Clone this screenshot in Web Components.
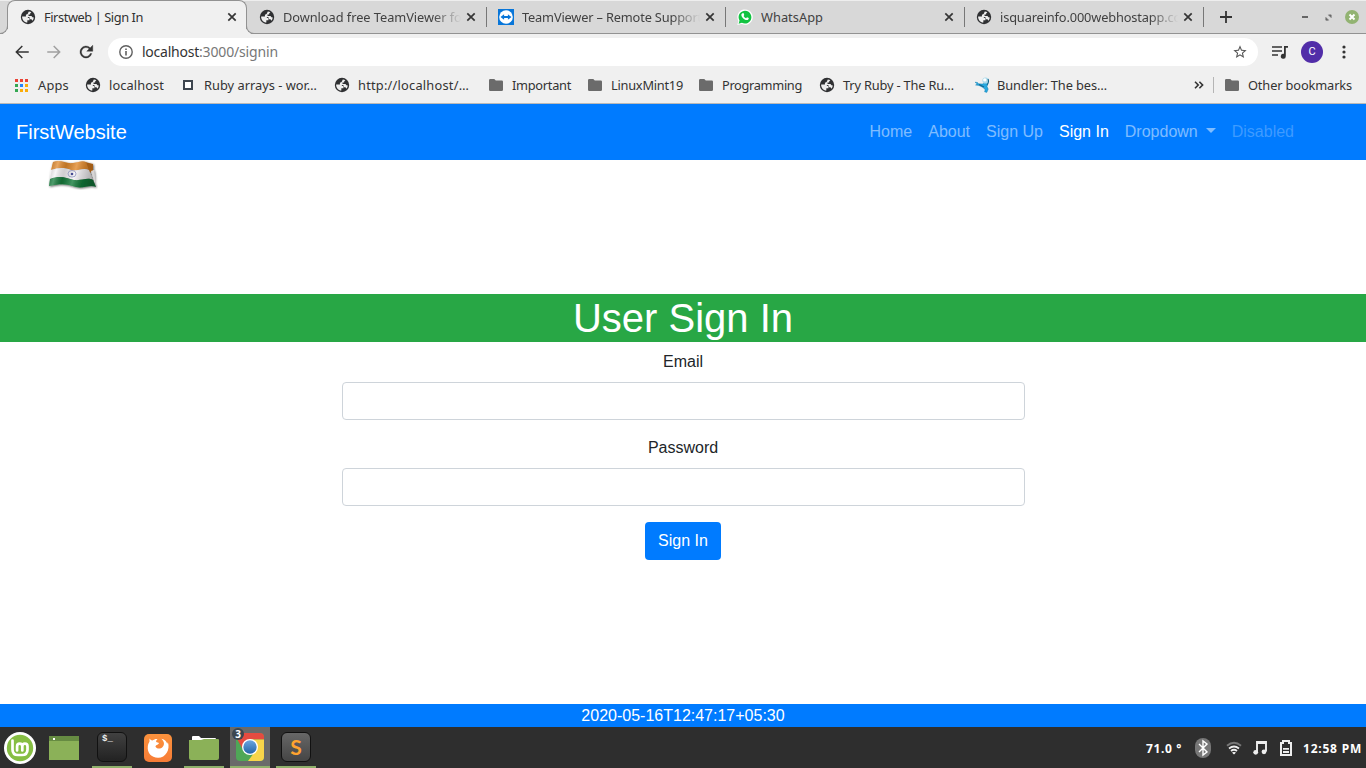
<!DOCTYPE html>
<html lang="en"><head><meta charset="utf-8"><title>Firstweb | Sign In</title>
<style>html,body{margin:0;width:1366px;height:768px;overflow:hidden;background:#fff}</style></head>
<body><desktop-screen></desktop-screen>
<script>
const define=(name,html,setup)=>customElements.define(name,class extends HTMLElement{
  connectedCallback(){
    if(this.shadowRoot)return;
    const root=this.attachShadow({mode:'open'});
    root.innerHTML=typeof html==='function'?html(this):html;
    if(setup)setup(this,root);
  }
});
const ICONS={
globe:['0 0 24 24','<circle cx="12" cy="12" r="10.8" fill="#2f3032"/><path d="M3.2 11.2h6.2c2 0 2.6 1 2.6 2.4h2.2v3.2h-3.2v3.6c-4.6-.3-8-4.3-7.8-9.2zM13.2 3.6c1.2.1 2.8.6 3.8 1.3l-1.8 1.8v1.7h-2.4v2.2h4.4l1.5 1.9 2 .3c-.2 2-.9 3.7-2 5l-1.5-2.3h-2.3v-2.3l-2.2-1.2-3.8-.8V8.8l2.5-1.3z" fill="#eee"/>'],
close:['0 0 10 10','<path d="M1.3 1.3l7.4 7.4m0-7.4L1.3 8.7" stroke="#353535" stroke-width="1.7" fill="none"/>'],
team:['0 0 16 16','<path fill="#0876d9" d="M0 0h16v16H0z"/><circle cx="8" cy="8" r="6.8" fill="#fff"/><path d="M2.5 8l3.6-2.7v1.8h3.8V5.3L13.5 8l-3.6 2.7V8.9H6.1v1.8z" fill="#0876d9"/>'],
whats:['0 0 16 16','<path d="M.3 16l1.1-4A7.7 7.7 0 1 1 4.6 15z" fill="#fff"/><path d="M1.6 14.7l.9-3.2a6.4 6.4 0 1 1 2.4 2.3z" fill="#12c341"/><path d="M5.4 4.2l1.1-.1.8 1.9-.7.9c.6 1.1 1.4 1.8 2.5 2.3l.9-1 1.8.9c0 1.4-.9 2.1-2.1 2-2.7-.3-5.1-2.8-5.4-5.1 0-.7.4-1.4 1.1-1.8z" fill="#fff"/>'],
plus:['0 0 12 12','<path d="M6 0v12M0 6h12" stroke="#333" stroke-width="1.8"/>'],
back:['0 0 24 24','<path d="M21 11H6.8l6.3-6.3L11.7 3.3 3 12l8.7 8.7 1.4-1.4L6.8 13H21z" fill="#333"/>'],
forward:['0 0 24 24','<path d="M3 11h14.2l-6.3-6.3 1.4-1.4L21 12l-8.7 8.7-1.4-1.4 6.3-6.3H3z" fill="#a0a0a0"/>'],
reload:['0 0 24 24','<path d="M17.65 6.35A8 8 0 1 0 19.73 14h-2.08A6 6 0 1 1 16.2 7.8L13 11h8V3z" fill="#333" stroke="#333" stroke-width=".5"/>'],
info:['0 0 14 14','<circle cx="7" cy="7" r="6.2" fill="none" stroke="#606060" stroke-width="1.4"/><path d="M6.2 6h1.6v4.4H6.2zM6.2 3.4h1.6V5H6.2z" fill="#606060"/>'],
star:['0 0 24 24','<path d="M22 9.24l-7.19-.62L12 2 9.19 8.63 2 9.24l5.46 4.73L5.82 21 12 17.27 18.18 21l-1.63-7.03zM12 15.4l-3.76 2.27 1-4.28-3.32-2.88 4.38-.38L12 6.1l1.71 4.04 4.38.38-3.32 2.88 1 4.28z" fill="#555"/>'],
queue:['0 0 16 13','<path d="M0 1h10M0 5h10M0 9h6" stroke="#333" stroke-width="1.7"/><path d="M12 9.3V0h4v1.8h-2.2v8.4a2.5 2.5 0 1 1-1.8-2.4" fill="#333"/>'],
dots:['0 0 4 14','<g fill="#333"><circle cx="2" cy="2" r="1.6"/><circle cx="2" cy="7" r="1.6"/><circle cx="2" cy="12" r="1.6"/></g>'],
apps:['0 0 13 13','<path fill="#ea4335" d="M0 0h3v3H0zM5 0h3v3H5zM10 0h3v3h-3z"/><path fill="#34a853" d="M0 5h3v3H0zM0 10h3v3H0z"/><path fill="#2684fc" d="M5 5h3v3H5z"/><path fill="#fbac09" d="M10 5h3v3h-3zM5 10h3v3H5zM10 10h3v3h-3z"/>'],
square:['0 0 10 10','<path d="M1 1h8v8H1z" fill="#fff" stroke="#3e464f" stroke-width="2"/>'],
folder:['0 0 14 12','<path d="M1.3 0h4L6.8 1.5h6q1.2 0 1.2 1.2v8q0 1.3-1.3 1.3H1.3Q0 12 0 10.7V1.3Q0 0 1.3 0z" fill="#6b6b6b"/>'],
bundler:['0 0 16 16','<path d="M1 5.2l2.5.3 1 1.3 3.8.3L12 5.5l2 1-1 3 1.2 2.6-1.4 3.3-2.2-.6.6-2-2.2-2.4-4-2L1.6 8l1.8-.9z" fill="#27a8df" stroke="#1783b4" stroke-width=".5"/><circle cx="11.5" cy="3.5" r="3.1" fill="#a9d9ea"/><circle cx="10.8" cy="2.9" r="1.7" fill="#fff"/><path d="M14 2q1.4 3-1 6M5 7.6l5 2.5" stroke="#14678f" stroke-width="1.1" fill="none"/>'],
restore:['0 0 8 8','<path d="M4 1h3v3zM1 4v3h3z" fill="#555" stroke="#777"/>'],
winclose:['0 0 14 14','<circle cx="7" cy="7" r="7" fill="#92b372"/><path d="M4.5 4.5l5 5m0-5l-5 5" stroke="#fff" stroke-width="2"/>'],
more:['0 0 10 8','<path d="M1 .8L4.2 4 1 7.2M5.4.8L8.6 4 5.4 7.2" fill="none" stroke="#333" stroke-width="1.6"/>'],
flag:['0 0 50 30','<defs><linearGradient id="a" x2="1" y2=".15"><stop stop-color="#000" stop-opacity=".2"/><stop offset=".2" stop-color="#fff" stop-opacity=".25"/><stop offset=".38" stop-color="#000" stop-opacity=".15"/><stop offset=".6" stop-color="#fff" stop-opacity=".2"/><stop offset=".8" stop-color="#000" stop-opacity=".16"/><stop offset="1" stop-color="#000" stop-opacity=".3"/></linearGradient><filter id="b"><feDropShadow dx=".8" dy=".8" stdDeviation=".8" flood-opacity=".65"/></filter></defs><g filter="url(#b)"><path d="M37 2l8 2v7l-4 2z" fill="#a35d18"/><path d="M43 11l3-1 1 13z" fill="#d8d5d5"/><path d="M5 2C13-1 17 4 25 3c6-1 9-3 13-1l3 8c-6-3-12 2-18 0C15 7 10 8 3 10z" fill="#e28a2d"/><path d="M3 10c7-2 12-3 20 0 6 2 12-3 18 0l4 10c-6-3-11 1-19 0-8-2-13-5-24-1z" fill="#f5f3f6"/><path d="M2 19c10-4 16-1 24 1 8 1 13-3 19 0l3 7c-6-3-13 2-20 0-9-3-14-4-27-1z" fill="#147b3b"/><path d="M5 2C13-1 17 4 25 3c6-1 9-3 13-1l10 25c-6-3-13 2-20 0-9-3-14-4-27-1z" fill="url(#a)"/></g><ellipse cx="24" cy="13.8" rx="4" ry="3.3" fill="none" stroke="#8c91bd" stroke-width=".8"/><circle cx="24" cy="14" r="1.3" fill="#454a91"/>'],
mint:['0 0 32 32','<circle cx="16" cy="16" r="16" fill="#fff"/><circle cx="16" cy="16" r="13.2" fill="#86be43"/><path d="M8.5 8.5v9q0 5.5 5.5 5.5h4q5.5 0 5.5-5.5v-3q0-2.8-2.6-2.8t-2.6 2.8v4m0-4q0-2.8-2.6-2.8t-2.6 2.8v4" fill="none" stroke="#fff" stroke-width="2.7" stroke-linecap="round"/>'],
desktop:['0 0 30 24','<path fill="#8bb158" d="M0 0h30v24H0z"/><path fill="#668b42" d="M0 0h30v5H0z"/><path fill="#fff" d="M4 2h2v2H4z"/>'],
firefox:['0 0 28 28','<defs><linearGradient id="f" y2="1" x2="0"><stop stop-color="#fb923d"/><stop offset="1" stop-color="#f77c36"/></linearGradient></defs><rect width="28" height="28" rx="5" fill="url(#f)"/><path d="M5.5 4.5q1.4 2.1 2.8 2.1c1.8-1.5 3.8-1.9 5.3-1.6-1.2.8-1.6 2-1.4 3l2.9 1.1c-.5 1.8-2.9 1.6-3.7 3.1.8 2.7 4.9 3.3 7.2.8 2.4-2.5 1.4-5.9-1.2-8.2 3.6.7 5.3 2.8 5.8 5l.7-1.6c2.5 7.6-2.3 15.4-9.6 15.6-6.8.2-11.3-5-10.5-11.2.1-2.3 1.2-4.1 1.7-5.1z" fill="#fff"/>'],
files:['0 0 30 25','<path d="M3 8V2q0-1 1-1h6l2 2h14q1 0 1 1v4z" fill="#fff"/><path d="M0 5h12l3-1h14q1 0 1 1v18q0 2-2 2H2q-2 0-2-2z" fill="#8bb158"/>'],
chrome:['0 0 28 28','<defs><clipPath id="c"><rect width="28" height="28" rx="4"/></clipPath><linearGradient id="d" x2="0" y2="1"><stop stop-color="#6ba6df"/><stop offset="1" stop-color="#2465a9"/></linearGradient></defs><g clip-path="url(#c)"><path fill="#4fa757" d="M0 0h28v28H0z"/><path fill="#e54b40" d="M0 0h28v6.5H14L6 15 0 4z"/><path fill="#f8d54a" d="M14 6.5h14V28H12l9-12z"/></g><circle cx="14" cy="14" r="8" fill="#fff"/><circle cx="14" cy="14" r="6.7" fill="url(#d)"/>'],
bluetooth:['0 0 16 20','<rect width="16" height="20" rx="8" fill="#777"/><path d="M4 6l8 8-4 3V3l4 3-8 8" fill="none" stroke="#fff" stroke-width="1.4"/>'],
wifi:['0 0 16 14','<path d="M1 4.8q7-6 14 0" fill="none" stroke="#777" stroke-width="2"/><path d="M3 7.5q5-4 10 0M5 10q3-2.4 6 0" fill="none" stroke="#eee" stroke-width="1.8"/><path d="M6 11.5q2-1 4 0l-2 2z" fill="#fff"/>'],
music:['0 0 14 14','<path d="M4 11V1h9v9.5M4 2h9" fill="none" stroke="#eee" stroke-width="1.9"/><circle cx="2.7" cy="11.3" r="2.4" fill="#eee"/><circle cx="11" cy="10.8" r="2.4" fill="#eee"/>'],
battery:['0 0 12 16','<path d="M1 3h2V1h6v2h2v12H1z" fill="none" stroke="#eee" stroke-width="2"/><path fill="#eee" d="M3 8h6v1.7H3zM3 11h6v2H3z"/>']
};
define('ui-icon',e=>{const i=ICONS[e.getAttribute('name')];return `<style>:host{display:block;flex:none;width:${e.getAttribute('w')}px;height:${e.getAttribute('h')||e.getAttribute('w')}px}svg{display:block;width:100%;height:100%}</style><svg viewBox="${i[0]}">${i[1]}</svg>`});
// Adjusts tracking so a label occupies its assigned width.
define('fit-text','<style>:host{display:inline-block;white-space:nowrap;flex:none}span{display:inline-block}</style><span><slot></slot></span>',(e,r)=>{
 const s=r.querySelector('span'),w=+e.getAttribute('w');s.style.letterSpacing=((w-s.getBoundingClientRect().width)/e.textContent.length)+'px';
});
define('browser-tab',e=>`<style>
:host{display:flex;box-sizing:border-box;width:239px;height:33px;align-items:center;padding:1px 10px 0 12px;color:#414141;font:12.8px "Noto Sans",sans-serif;position:relative;flex:none}
:host([active]){width:240px;height:34px;background:#f0f0f0;border:1px solid #929292;border-bottom:0;border-radius:8px 8px 0 0;padding:0 10px 1px 12px;color:#303030;z-index:1}
:host([active])::before,:host([active])::after{content:"";position:absolute;bottom:0;width:8px;height:8px;border-bottom:1px solid #929292;box-sizing:border-box}
:host([active])::before{left:-8px;border-right:1px solid #929292;border-radius:0 0 8px 0;box-shadow:3px 3px 0 #f0f0f0;clip-path:inset(0)}
:host([active])::after{right:-8px;border-left:1px solid #929292;border-radius:0 0 0 8px;box-shadow:-3px 3px 0 #f0f0f0;clip-path:inset(0)}
.icon{width:24px;display:flex;flex:none}.label{width:178px;flex:none;overflow:hidden;white-space:nowrap;line-height:20px;margin-top:-1px}
:host([fade]) .label{-webkit-mask-image:linear-gradient(90deg,#000 150px,transparent 178px)}
.x{margin-left:5px}:host([sep])::after{content:"";position:absolute;right:-1px;top:7px;height:20px;border-right:1px solid #777}
</style><div class="icon"><ui-icon name="${e.getAttribute('icon')}" w="16"></ui-icon></div><div class="label"><fit-text w="${e.getAttribute('tw')}">${e.getAttribute('label')}</fit-text></div><ui-icon class="x" name="close" w="10"></ui-icon>`);
define('tab-strip',`<style>:host{display:flex;box-sizing:border-box;height:34px;background:#d8d8d8;border-bottom:1px solid #929292;box-shadow:inset 0 1px #eee;padding-left:7px}
.plus{margin:11px 0 0 17px}.win{margin:9px 7px 0 auto;display:flex;align-items:center;height:16px}.min{width:6px;height:2px;background:#666;margin-right:17px}.res{margin-right:13px}</style>
<browser-tab active icon="globe" label="Firstweb | Sign In" tw="99"></browser-tab>
<browser-tab fade sep icon="globe" label="Download free TeamViewer for" tw="184"></browser-tab>
<browser-tab fade sep icon="team" label="TeamViewer – Remote Support" tw="180"></browser-tab>
<browser-tab sep icon="whats" label="WhatsApp" tw="62"></browser-tab>
<browser-tab fade sep icon="globe" label="isquareinfo.000webhostapp.com" tw="193"></browser-tab>
<ui-icon class="plus" name="plus" w="12"></ui-icon><div class="win"><div class="min"></div><ui-icon class="res" name="restore" w="7"></ui-icon><ui-icon name="winclose" w="14"></ui-icon></div>`);
define('address-bar',`<style>:host{display:flex;align-items:center;height:36px;background:#f0f0f0;padding-left:13px;box-sizing:border-box}
.nav{margin-right:14px}.box{display:flex;align-items:center;box-sizing:border-box;width:1150px;height:28px;border-radius:14px;background:#fff;padding:0 10px 0 11px;margin-left:-1px;color:#777;font:14px "Noto Sans",sans-serif}
fit-text{margin-top:-2px}.info{margin-right:9px}.host{color:#333}.star{margin-left:auto}.queue{margin-left:14px}.avatar{width:22px;height:22px;border-radius:50%;background:#512da8;color:#fff;font:11px/22px Roboto,sans-serif;text-align:center;margin:0 19px 0 13px}</style>
<ui-icon class="nav" name="back" w="18"></ui-icon><ui-icon class="nav" name="forward" w="18"></ui-icon><ui-icon class="nav" name="reload" w="18"></ui-icon>
<div class="box"><ui-icon class="info" name="info" w="14"></ui-icon><fit-text class="host" w="57">localhost</fit-text><fit-text w="79">:3000/signin</fit-text><ui-icon class="star" name="star" w="16"></ui-icon></div>
<ui-icon class="queue" name="queue" w="16" h="13"></ui-icon><div class="avatar">C</div><ui-icon name="dots" w="4" h="14"></ui-icon>`);
define('bookmark-item',e=>`<style>:host{display:flex;align-items:center;flex:none;width:${e.getAttribute('width')}px;height:30px}.i{width:${e.getAttribute('gap')}px}</style><div class="i"><ui-icon name="${e.getAttribute('icon')}" w="${e.getAttribute('iw')}" h="${e.getAttribute('ih')||e.getAttribute('iw')}"></ui-icon></div><fit-text w="${e.getAttribute('tw')}">${e.getAttribute('label')}</fit-text>`);
define('bookmark-bar',()=>{const a=[
['apps',13,13,'Apps',70,23,31],['globe',16,16,'localhost',98,24,55],['square',10,10,'Ruby arrays - wor…',151,21,113],['globe',16,16,'http://localhost/…',155,24,111],['folder',14,12,'Important',99,23,59],['folder',14,12,'LinuxMint19',111,23,72],['folder',14,12,'Programming',120,23,80],['globe',16,16,'Try Ruby - The Ru…',155,24,111],['bundler',16,16,'Bundler: The bes…',220,23,110]];
return `<style>:host{display:flex;align-items:center;box-sizing:border-box;height:34px;background:#f0f0f0;border-bottom:1px solid #b9b9b9;padding:0 0 3px 15px;color:#333;font:12.8px "Noto Sans",sans-serif}.more{margin-right:9px}.sep{width:1px;height:16px;background:#b5b5b5;margin-right:11px}</style>`+a.map(x=>`<bookmark-item icon="${x[0]}" iw="${x[1]}" ih="${x[2]}" label="${x[3]}" width="${x[4]}" gap="${x[5]}" tw="${x[6]}"></bookmark-item>`).join('')+`<ui-icon class="more" name="more" w="10" h="8"></ui-icon><div class="sep"></div><bookmark-item icon="folder" iw="14" ih="12" label="Other bookmarks" width="140" gap="23" tw="104"></bookmark-item>`});
define('site-nav',`<style>:host{display:flex;align-items:center;box-sizing:border-box;height:56px;padding:0 72px 0 16px;background:#007bff;color:rgba(255,255,255,.5);font:16px "Liberation Sans",sans-serif}.brand{color:#fff;font-size:20px;margin-right:auto}.links{display:flex;gap:16px}.on{color:#fff}.off{color:rgba(255,255,255,.25)}.caret{display:inline-block;margin-left:8px;vertical-align:4px;border:5px solid transparent;border-top-color:currentColor;border-bottom:0}</style><span class="brand">FirstWebsite</span><div class="links"><span>Home</span><span>About</span><span>Sign Up</span><span class="on">Sign In</span><span>Dropdown<i class="caret"></i></span><span class="off">Disabled</span></div>`);
define('form-field',`<style>:host{display:flex;flex-direction:column;align-items:center;gap:8px;margin-bottom:16px}label{line-height:24px}input{box-sizing:border-box;width:683px;height:38px;border:1px solid #ced4da;border-radius:4px;background:#fff}</style><label><slot></slot></label><input>`);
define('signin-form',`<style>:host{display:flex;flex-direction:column;align-items:center;color:#212529;font:16px/24px "Liberation Sans",sans-serif}h1{width:100%;height:48px;margin:0 0 8px;background:#28a745;color:#fff;text-align:center;font-size:40px;line-height:48px;font-weight:400}button{width:76px;height:38px;border:0;border-radius:4px;background:#007bff;color:#fff;font:16px "Liberation Sans",sans-serif;padding:0}</style><h1>User Sign In</h1><form-field>Email</form-field><form-field>Password</form-field><button>Sign In</button>`);
define('web-page',`<style>:host{display:flex;flex-direction:column;height:623px;background:#fff}.mark{height:134px;padding-left:48px}footer{margin-top:auto;background:#007bff;color:#fff;text-align:center;height:23px;font:16px/24px "Liberation Sans",sans-serif;overflow:hidden}</style><site-nav></site-nav><div class="mark"><ui-icon name="flag" w="50" h="30"></ui-icon></div><signin-form></signin-form><footer>2020-05-16T12:47:17+05:30</footer>`);
define('task-button',`<style>:host{display:flex;position:relative;box-sizing:border-box;width:40px;height:41px;align-items:center;justify-content:center;flex:none}:host([running]){border-bottom:2px solid #8fb06b;padding-top:1px}:host([current]){background:#6a6a6a}.badge{display:none}:host([count]) .badge{display:block;position:absolute;left:2px;top:1px;width:12px;height:12px;border-radius:50%;background:#3b4650;color:#fff;font:bold 10px/12px "Noto Sans",sans-serif;text-align:center}</style><slot></slot><span class="badge"></span>`,(e,r)=>{r.querySelector('.badge').textContent=e.getAttribute('count')||''});
define('task-bar',`<style>:host{display:flex;align-items:center;height:41px;background:#2e2e2e;color:#fff;font:bold 12px "Noto Sans",sans-serif}.apps{display:flex;gap:6px}.tile{box-sizing:border-box;width:30px;height:30px;border-radius:6px;background:linear-gradient(#414141,#222);border:1px solid #111;color:#eee;font:bold 9px/13px "Liberation Mono",monospace;padding-left:4px}.s{background:linear-gradient(#676767,#454545);font:bold 21px/27px Lato,sans-serif;text-align:center;padding:0;color:#ffa42f}.tray{display:flex;align-items:center;margin-left:auto;padding-right:4px}.bt{margin:0 15px 0 13px}.music{margin:0 13px 0 11px}.batt{margin-right:11px}.tray fit-text{margin-top:2px}</style>
<div class="apps"><task-button><ui-icon name="mint" w="32"></ui-icon></task-button><task-button style="margin-left:-2px"><ui-icon name="desktop" w="30" h="24"></ui-icon></task-button><task-button running style="margin-left:2px"><div class="tile">$_</div></task-button><task-button><ui-icon name="firefox" w="28"></ui-icon></task-button><task-button running><ui-icon name="files" w="30" h="25"></ui-icon></task-button><task-button running current count="3"><ui-icon name="chrome" w="28"></ui-icon></task-button><task-button running><div class="tile s">S</div></task-button></div>
<div class="tray"><fit-text w="36">71.0 °</fit-text><ui-icon class="bt" name="bluetooth" w="16" h="20"></ui-icon><ui-icon name="wifi" w="16" h="14"></ui-icon><ui-icon class="music" name="music" w="14"></ui-icon><ui-icon class="batt" name="battery" w="12" h="16"></ui-icon><fit-text w="59">12:58 PM</fit-text></div>`);
define('desktop-screen',`<style>:host{display:flex;flex-direction:column;width:1366px;height:768px}</style><tab-strip></tab-strip><address-bar></address-bar><bookmark-bar></bookmark-bar><web-page></web-page><task-bar></task-bar>`);
</script></body></html>
